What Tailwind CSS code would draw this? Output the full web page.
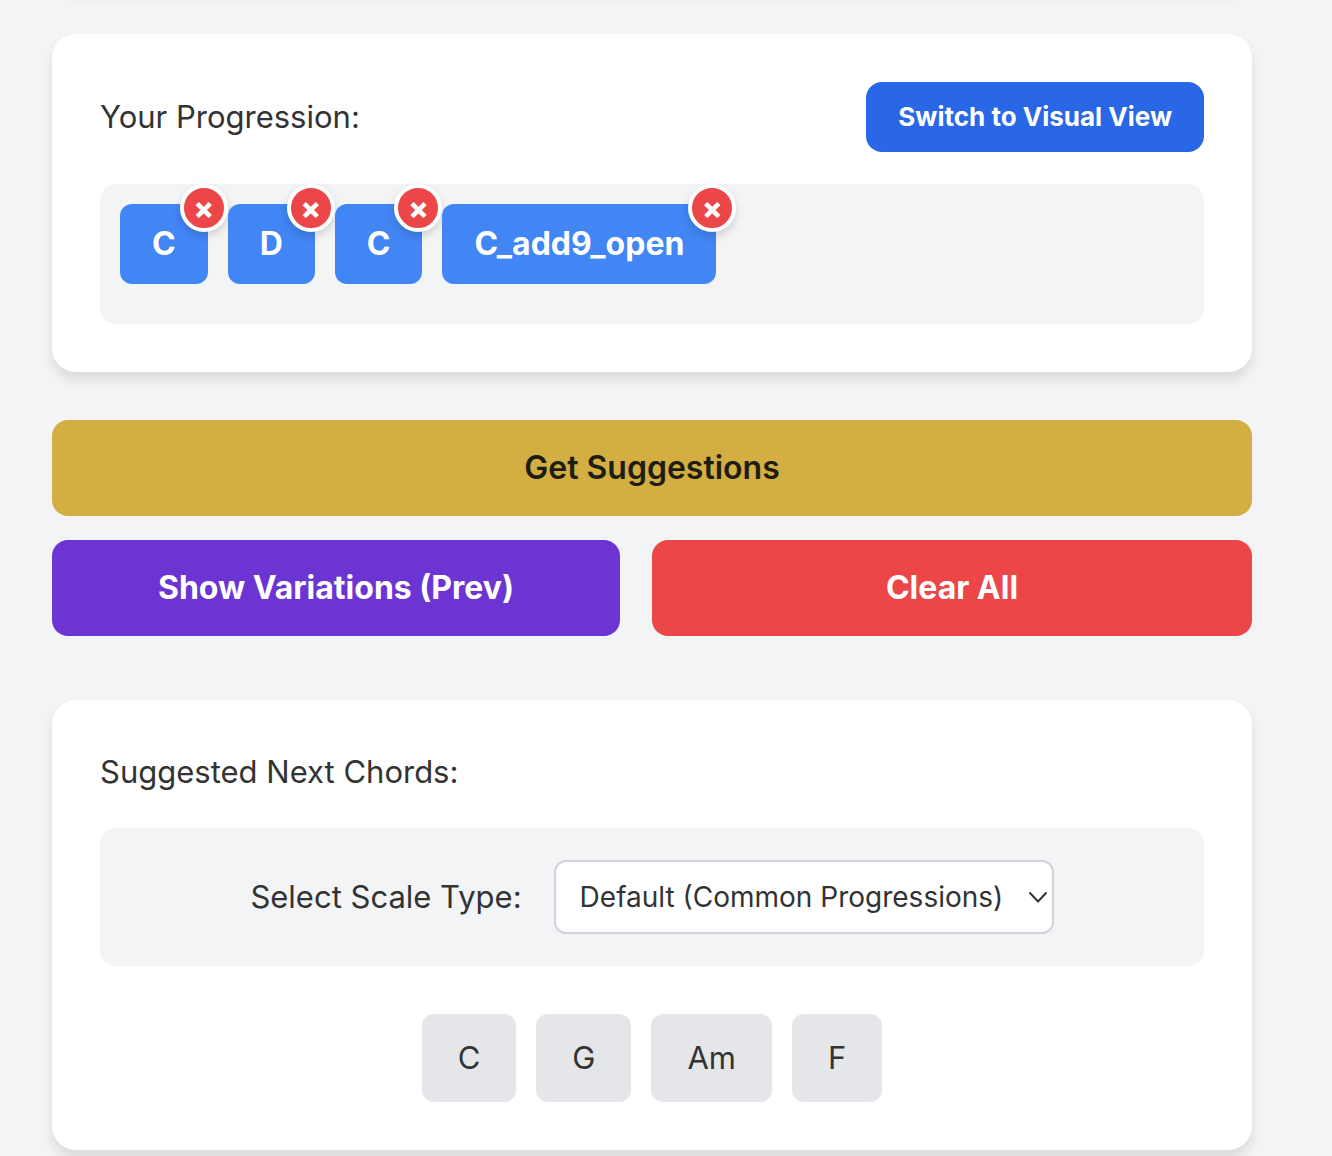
<!DOCTYPE html>
<html lang="en">
<head>
  <meta charset="UTF-8" />
  <meta name="viewport" content="width=device-width, initial-scale=1.0"/>
  <title>Chord Progression Builder</title>
  <script src="https://cdn.jsdelivr.net/npm/@tailwindcss/browser@4"></script>
</head>
<body class="bg-[#f2f4f6] text-[#333] font-['Inter','Liberation_Sans',sans-serif] text-[32px] leading-[48px] overflow-x-hidden">
  <main class="flow-root pl-[52px] pr-20 pb-12 -mt-16">

    <!-- previous card, scrolled out of view -->
    <div class="h-[50px] mb-12 bg-white rounded-3xl shadow-[0_8px_12px_rgba(0,0,0,0.1)]"></div>

    <!-- progression -->
    <section class="bg-white rounded-3xl p-12 mb-12 shadow-[0_8px_12px_rgba(0,0,0,0.1)]">
      <div class="flex items-center justify-between mb-8">
        <h2 class="text-[31px]">Your Progression:</h2>
        <button type="button" class="h-[70px] px-8 rounded-2xl bg-[#2a67e6] text-white text-[26px] font-bold">Switch to Visual View</button>
      </div>
      <div class="flex flex-wrap items-start gap-5 p-5 min-h-[140px] rounded-2xl bg-[#f2f4f6] text-white font-bold">
        <div class="relative px-8 py-4 rounded-xl bg-[#4285f4]">C
          <button type="button" aria-label="Remove C" class="absolute -top-5 -right-5 size-12 flex items-center justify-center rounded-full border-4 border-white bg-[#ec4649] shadow-[0_4px_8px_rgba(0,0,0,0.15)] text-[30px] font-extrabold">×</button>
        </div>
        <div class="relative px-8 py-4 rounded-xl bg-[#4285f4]">D
          <button type="button" aria-label="Remove D" class="absolute -top-5 -right-5 size-12 flex items-center justify-center rounded-full border-4 border-white bg-[#ec4649] shadow-[0_4px_8px_rgba(0,0,0,0.15)] text-[30px] font-extrabold">×</button>
        </div>
        <div class="relative px-8 py-4 rounded-xl bg-[#4285f4]">C
          <button type="button" aria-label="Remove C" class="absolute -top-5 -right-5 size-12 flex items-center justify-center rounded-full border-4 border-white bg-[#ec4649] shadow-[0_4px_8px_rgba(0,0,0,0.15)] text-[30px] font-extrabold">×</button>
        </div>
        <div class="relative px-8 py-4 rounded-xl bg-[#4285f4]">C_add9_open
          <button type="button" aria-label="Remove C_add9_open" class="absolute -top-5 -right-5 size-12 flex items-center justify-center rounded-full border-4 border-white bg-[#ec4649] shadow-[0_4px_8px_rgba(0,0,0,0.15)] text-[30px] font-extrabold">×</button>
        </div>
      </div>
    </section>

    <!-- actions -->
    <div class="mb-16">
      <button type="button" class="block w-full h-24 mb-6 rounded-2xl bg-[#d2ae43] text-[#1f1d12] font-semibold">Get Suggestions</button>
      <div class="grid grid-cols-[568fr_600fr] gap-8 text-white font-bold">
        <button type="button" class="h-24 rounded-2xl bg-[#6c35d3]">Show Variations (Prev)</button>
        <button type="button" class="h-24 rounded-2xl bg-[#ec4649]">Clear All</button>
      </div>
    </div>

    <!-- suggestions -->
    <section class="bg-white rounded-3xl p-12 shadow-[0_8px_12px_rgba(0,0,0,0.1)]">
      <h2 class="mb-8 text-[31px]">Suggested Next Chords:</h2>
      <div class="flex items-center justify-center gap-8 p-8 mb-12 rounded-2xl bg-[#f2f4f6]">
        <label for="scaleType" class="text-[31px]">Select Scale Type:</label>
        <div class="relative">
          <select id="scaleType" class="block w-[500px] h-[74px] pl-6 pr-12 appearance-none rounded-xl border-2 border-[#d1d3da] bg-white text-[28px]">
            <option>Default (Common Progressions)</option>
            <option>Major</option>
            <option>Minor</option>
          </select>
          <svg class="absolute right-1.5 top-7 size-5 pointer-events-none" viewBox="0 0 20 20" fill="none" stroke="#333" stroke-width="2" stroke-linecap="round" stroke-linejoin="round">
            <path d="M2 5 10 13.5 18 5"/>
          </svg>
        </div>
      </div>
      <div class="flex flex-wrap justify-center gap-5 text-[31px]">
        <button type="button" class="h-[88px] px-9 rounded-xl bg-[#e5e6ea]">C</button>
        <button type="button" class="h-[88px] px-9 rounded-xl bg-[#e5e6ea]">G</button>
        <button type="button" class="h-[88px] px-9 rounded-xl bg-[#e5e6ea]">Am</button>
        <button type="button" class="h-[88px] px-9 rounded-xl bg-[#e5e6ea]">F</button>
      </div>
    </section>
  </main>
</body>
</html>
